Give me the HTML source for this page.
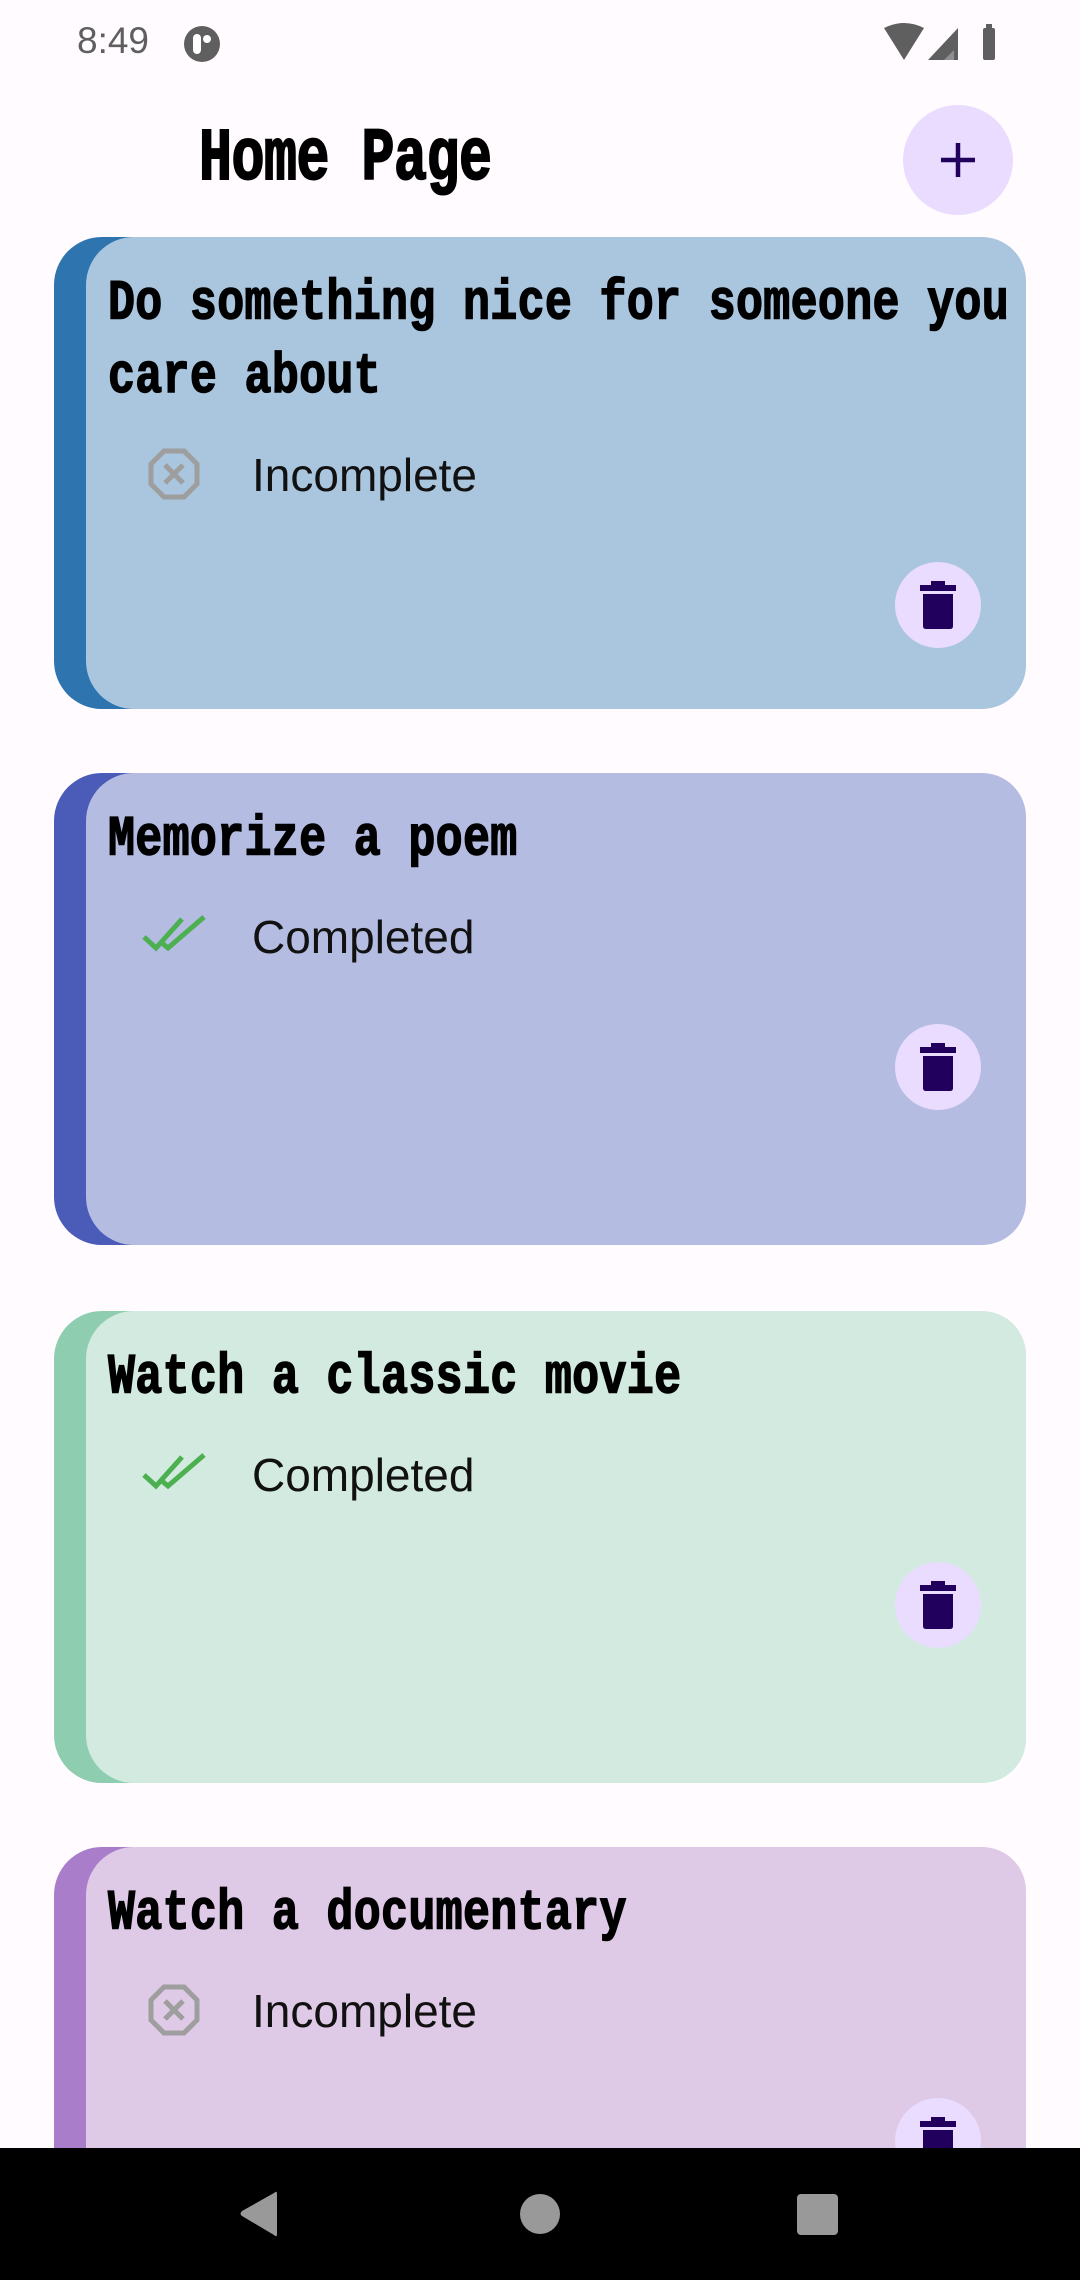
<!DOCTYPE html>
<html><head><meta charset="utf-8"><style>
*{margin:0;padding:0;box-sizing:border-box}
html{width:1080px;height:2280px;overflow:hidden}
body{width:1080px;height:2280px;background:#fffbfe;position:relative;overflow:hidden;font-family:"Liberation Sans",sans-serif}
.abs{position:absolute}
.time{left:77px;top:20px;font-size:37px;color:#5f5f5f}
.title{left:199px;top:128px;font-family:"Liberation Mono",monospace;font-weight:bold;font-size:55px;color:#000;letter-spacing:-0.5px;transform:scaleY(1.35);transform-origin:0 50%;-webkit-text-stroke:1.5px #000}
.plus{left:903px;top:105px;width:110px;height:110px;border-radius:50%;background:#eadcff}
.card{position:absolute;left:54px;width:972px;height:472px;border-radius:48px}
.inner{position:absolute;left:32px;top:0;right:0;bottom:0;border-radius:48px 44px 44px 48px}
.ct{position:absolute;left:22px;top:30px;width:990px;font-family:"Liberation Mono",monospace;font-weight:bold;font-size:45px;line-height:59px;color:#000;letter-spacing:0.3px;transform:scaleY(1.25);transform-origin:0 0;-webkit-text-stroke:1.2px #000}
.st{position:absolute;left:166px;font-size:46px;color:#111}
.ic{position:absolute;left:60px;width:56px;height:56px}
.ck{position:absolute;left:56px;width:66px;height:56px}
.tr{position:absolute;left:809px;width:86px;height:86px;border-radius:50%;background:#eadcff}
.nav{left:0;top:2148px;width:1080px;height:132px;background:#000}
</style></head><body>
<div class="abs time">8:49</div>
<svg class="abs" style="left:182px;top:24px" width="40" height="40" viewBox="0 0 40 40"><circle cx="20" cy="20" r="18" fill="#5f5f5f"/><rect x="11" y="10" width="8" height="20" rx="4" fill="#fff"/><circle cx="25" cy="15" r="4" fill="#fff"/></svg>
<svg class="abs" style="left:884px;top:22px" width="120" height="40" viewBox="0 0 120 40"><path d="M0 6 Q20 -4 40 6 L20 38 Z" fill="#5f5f5f"/><path d="M44 38 L74 6 L74 38 Z" fill="#5f5f5f"/><path d="M60 38 L70 28 L70 38Z" fill="#fff" opacity=".3"/><rect x="99" y="6" width="12" height="32" rx="2" fill="#5f5f5f"/><rect x="102" y="2" width="6" height="5" fill="#5f5f5f"/></svg>
<div class="abs title">Home Page</div>
<div class="abs plus"><svg width="110" height="110" viewBox="0 0 110 110"><path d="M55 38V72M38 55H72" stroke="#21005d" stroke-width="4.5"/></svg></div>

<!-- card 1 -->
<div class="card" style="top:237px;background:#2e75b0"><div class="inner" style="background:#aac6df">
<div class="ct">Do something nice for someone you care about</div>
<svg class="ic" style="top:209px" viewBox="0 0 56 56"><path d="M18 5H38L51 18V38L38 51H18L5 38V18Z" fill="none" stroke="#9e9e9e" stroke-width="5"/><path d="M19 19L37 37M37 19L19 37" stroke="#9e9e9e" stroke-width="5"/></svg>
<div class="st" style="top:211px">Incomplete</div>
<div class="tr" style="top:325px"><svg width="86" height="86" viewBox="0 0 86 86"><rect x="25" y="23" width="36" height="6" fill="#21005d"/><rect x="36" y="19" width="14" height="5" fill="#21005d"/><path d="M28 32H58V64Q58 67 55 67H31Q28 67 28 64Z" fill="#21005d"/></svg></div>
</div></div>

<!-- card 2 -->
<div class="card" style="top:773px;background:#4a5cb8"><div class="inner" style="background:#b4bce2">
<div class="ct">Memorize a poem</div>
<svg class="ck" style="top:134px" viewBox="0 0 66 56"><path d="M2 30L14 41L40 12M20 36L26 41L62 10" fill="none" stroke="#4caf50" stroke-width="5"/></svg>
<div class="st" style="top:137px">Completed</div>
<div class="tr" style="top:251px"><svg width="86" height="86" viewBox="0 0 86 86"><rect x="25" y="23" width="36" height="6" fill="#21005d"/><rect x="36" y="19" width="14" height="5" fill="#21005d"/><path d="M28 32H58V64Q58 67 55 67H31Q28 67 28 64Z" fill="#21005d"/></svg></div>
</div></div>

<!-- card 3 -->
<div class="card" style="top:1311px;background:#8ecdb0"><div class="inner" style="background:#d2eadf">
<div class="ct">Watch a classic movie</div>
<svg class="ck" style="top:134px" viewBox="0 0 66 56"><path d="M2 30L14 41L40 12M20 36L26 41L62 10" fill="none" stroke="#4caf50" stroke-width="5"/></svg>
<div class="st" style="top:137px">Completed</div>
<div class="tr" style="top:251px"><svg width="86" height="86" viewBox="0 0 86 86"><rect x="25" y="23" width="36" height="6" fill="#21005d"/><rect x="36" y="19" width="14" height="5" fill="#21005d"/><path d="M28 32H58V64Q58 67 55 67H31Q28 67 28 64Z" fill="#21005d"/></svg></div>
</div></div>

<!-- card 4 -->
<div class="card" style="top:1847px;height:301px;border-radius:48px 48px 0 0;background:#a97dc9"><div class="inner" style="background:#dec9e7;border-radius:48px 44px 0 0">
<div class="ct">Watch a documentary</div>
<svg class="ic" style="top:135px" viewBox="0 0 56 56"><path d="M18 5H38L51 18V38L38 51H18L5 38V18Z" fill="none" stroke="#9e9e9e" stroke-width="5"/><path d="M19 19L37 37M37 19L19 37" stroke="#9e9e9e" stroke-width="5"/></svg>
<div class="st" style="top:137px">Incomplete</div>
<div class="tr" style="top:251px"><svg width="86" height="86" viewBox="0 0 86 86"><rect x="25" y="23" width="36" height="6" fill="#21005d"/><rect x="36" y="19" width="14" height="5" fill="#21005d"/><path d="M28 32H58V64Q58 67 55 67H31Q28 67 28 64Z" fill="#21005d"/></svg></div>
</div></div>

<div class="abs nav"><svg width="1080" height="132" viewBox="0 0 1080 132"><path d="M277 46V86Q277 90 274 87L242 68Q239 66 242 63L274 45Q277 42 277 46Z" fill="#999"/><circle cx="540" cy="66" r="20" fill="#999"/><rect x="797" y="46" width="41" height="41" rx="4" fill="#999"/></svg></div>
</body></html>
